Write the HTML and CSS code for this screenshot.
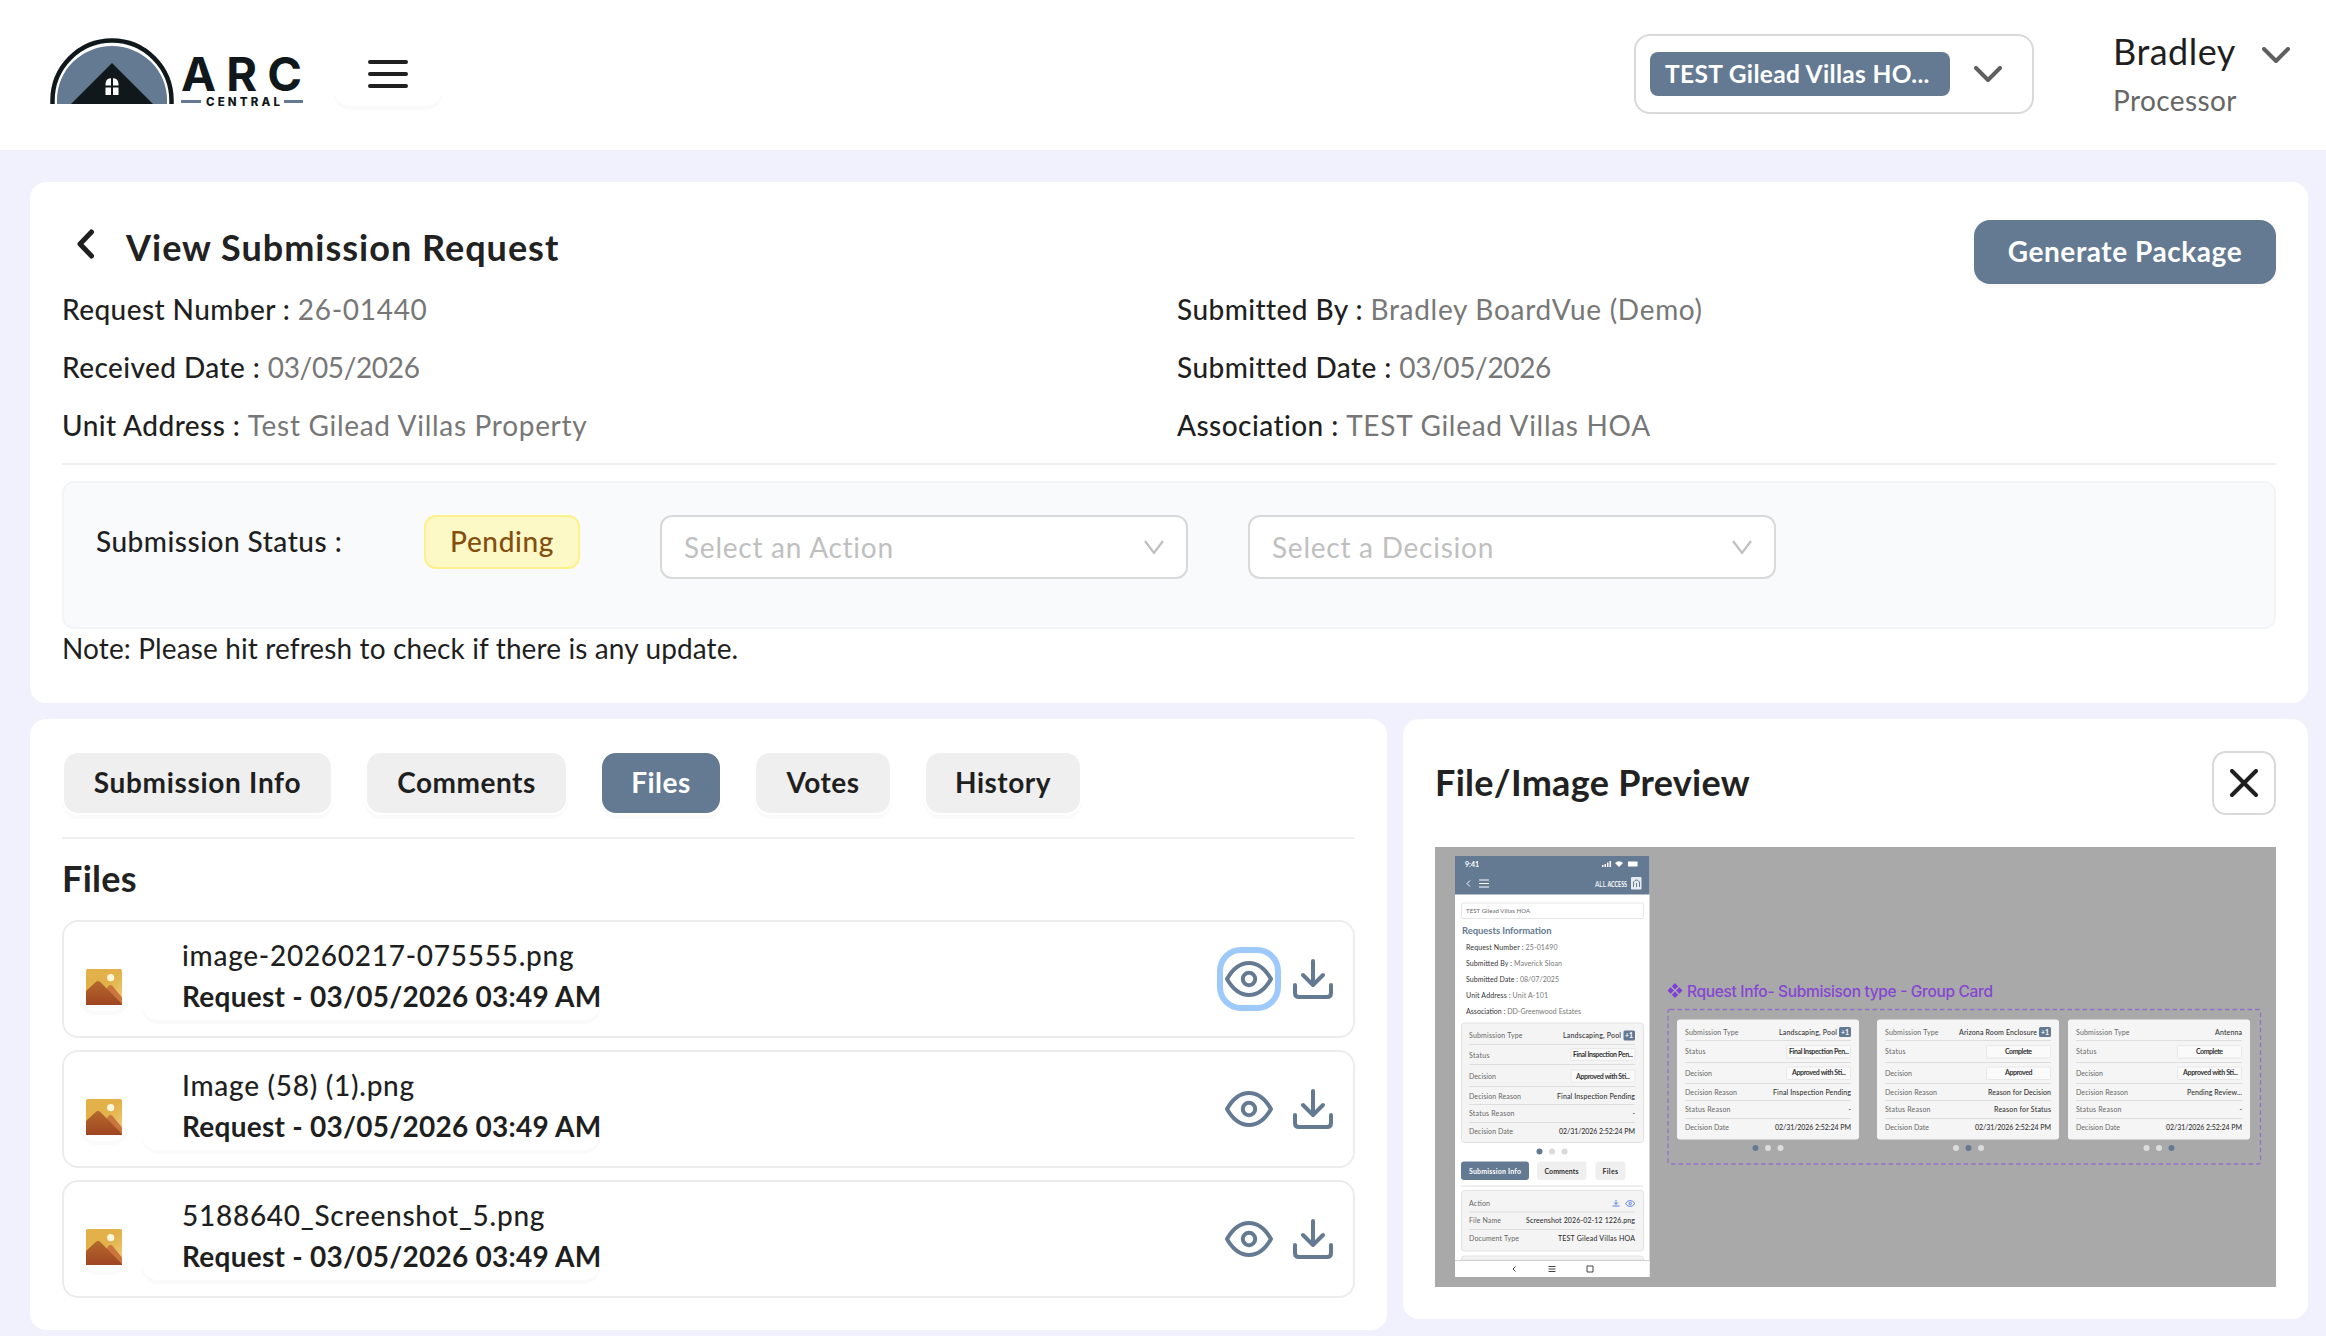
FILE: index.html
```html
<!DOCTYPE html>
<html lang="en">
<head>
  <meta charset="UTF-8" />
  <meta name="viewport" content="width=device-width, initial-scale=1" />
  <title>ARC Central - View Submission Request</title>
  <link rel="stylesheet" href="styles.css">
</head>

<body>
  <!-- Shared icons -->
  <svg class="sprite" width="0" height="0">
    <defs>
      <linearGradient id="sky" x1="0" y1="0" x2="1" y2="1">
        <stop offset="0.5" stop-color="#e2b149" />
        <stop offset="1" stop-color="#f0d080" />
      </linearGradient>
      <linearGradient id="hill" x1="0" y1="0" x2="0" y2="1">
        <stop offset="0" stop-color="#b56a2c" />
        <stop offset="1" stop-color="#a04523" />
      </linearGradient>
      <symbol id="icon-image" viewBox="0 0 36 36">
        <rect width="36" height="36" rx="1.5" fill="url(#sky)" />
        <circle cx="24.7" cy="8.7" r="3.6" fill="#fff6dc" />
        <path d="M15 26l7.500-9q2-2 4 0L36 28.500V36H15z" fill="#c9753c" />
        <path d="M0 22l9.500-8.800q2.500-2.400 5 0L36 35v1H0z" fill="url(#hill)" />
      </symbol>
      <symbol id="icon-eye" viewBox="0 0 48 48">
        <path d="M2 24C8 13.500 15.500 8 24 8s16 5.500 22 16c-6 10.500-13.500 16-22 16S8 34.500 2 24z" />
        <circle cx="24" cy="24" r="6.200" />
      </symbol>
      <symbol id="icon-download" viewBox="0 0 48 48">
        <path d="M24 6v24M14 20l10 10 10-10M6 30v8q0 4 4 4h28q4 0 4-4v-8" />
      </symbol>
      <symbol id="icon-chevron" viewBox="0 0 28 16">
        <path d="M2 2l12 12L26 2" />
      </symbol>
    </defs>
  </svg>

  <header class="topbar">
    <svg class="logo" width="256" height="72" viewBox="0 0 256 72">
      <path d="M2.500 68V64.500a59.500 60 0 0 1 119 0V68" fill="none" stroke="#10181c" stroke-width="4.500" />
      <path d="M7 68V64a55 54 0 0 1 110 0v4z" fill="#647a92" />
      <path d="M62 27l41 41H21z" fill="#10181c" />
      <path d="M55.500 59V48q0-6 6.500-6t6.500 6v11z" fill="#fff" />
      <path d="M62 42v17M55 50.500h14" stroke="#10181c" stroke-width="2" />
      <text class="logo-name" x="131" y="54.500" textLength="121">ARC</text>
      <path d="M131 65.500h20M234 65.500h19" stroke="#647a92" stroke-width="2.800" />
      <text class="logo-sub" x="156" y="69.500" textLength="74">CENTRAL</text>
    </svg>
    <button class="menu-btn">
      <svg width="40" height="28" viewBox="0 0 40 28"><path d="M2 2h36M2 14h36M2 26h36" /></svg>
    </button>
    <div class="assoc-select">
      <span class="assoc-tag">TEST Gilead Villas HO...</span>
      <svg class="chevron" width="28" height="16"><use href="#icon-chevron" /></svg>
    </div>
    <div class="user">
      <div class="user-name">Bradley</div>
      <div class="user-role">Processor</div>
    </div>
    <svg class="chevron user-chevron" width="28" height="16"><use href="#icon-chevron" /></svg>
  </header>

  <main class="page">
    <section class="card summary">
      <div class="summary-head">
        <svg class="back" width="20" height="30" viewBox="0 0 20 30"><path d="M15.500 3L4 15l11.500 12" /></svg>
        <h1>View Submission Request</h1>
        <button class="primary-btn">Generate Package</button>
      </div>
      <div class="details">
        <div>Request Number : <span>26-01440</span></div>
        <div>Submitted By : <span>Bradley BoardVue (Demo)</span></div>
        <div>Received Date : <span class="date">03/05/2026</span></div>
        <div>Submitted Date : <span class="date">03/05/2026</span></div>
        <div>Unit Address : <span>Test Gilead Villas Property</span></div>
        <div>Association : <span>TEST Gilead Villas HOA</span></div>
      </div>
      <div class="status-box">
        <div class="status-label">Submission Status :</div>
        <div class="badge-pending">Pending</div>
        <div class="select">
          <span>Select an Action</span>
          <svg width="22" height="16" viewBox="0 0 22 16"><path d="M2 2l9 12 9-12" /></svg>
        </div>
        <div class="select">
          <span>Select a Decision</span>
          <svg width="22" height="16" viewBox="0 0 22 16"><path d="M2 2l9 12 9-12" /></svg>
        </div>
      </div>
      <p class="note">Note: Please hit refresh to check if there is any update.</p>
    </section>

    <div class="columns">
      <section class="card files">
        <nav class="tabs">
          <button class="tab tab-info">Submission Info</button>
          <button class="tab tab-comments">Comments</button>
          <button class="tab tab-files active">Files</button>
          <button class="tab tab-votes">Votes</button>
          <button class="tab tab-history">History</button>
        </nav>
        <h2>Files</h2>
        <div class="file-list">
          <div class="file-row">
            <div class="thumb"><svg width="36" height="36"><use href="#icon-image" /></svg></div>
            <div class="file-info">
              <div class="file-name">image-20260217-075555.png</div>
              <div class="file-date">Request - 03/05/2026 03:49 AM</div>
            </div>
            <div class="actions">
              <button class="icon-btn focused"><svg width="48" height="48"><use href="#icon-eye" /></svg></button>
              <button class="icon-btn"><svg width="48" height="48"><use href="#icon-download" /></svg></button>
            </div>
          </div>
          <div class="file-row">
            <div class="thumb"><svg width="36" height="36"><use href="#icon-image" /></svg></div>
            <div class="file-info">
              <div class="file-name">Image (58) (1).png</div>
              <div class="file-date">Request - 03/05/2026 03:49 AM</div>
            </div>
            <div class="actions">
              <button class="icon-btn"><svg width="48" height="48"><use href="#icon-eye" /></svg></button>
              <button class="icon-btn"><svg width="48" height="48"><use href="#icon-download" /></svg></button>
            </div>
          </div>
          <div class="file-row">
            <div class="thumb"><svg width="36" height="36"><use href="#icon-image" /></svg></div>
            <div class="file-info">
              <div class="file-name">5188640_Screenshot_5.png</div>
              <div class="file-date">Request - 03/05/2026 03:49 AM</div>
            </div>
            <div class="actions">
              <button class="icon-btn"><svg width="48" height="48"><use href="#icon-eye" /></svg></button>
              <button class="icon-btn"><svg width="48" height="48"><use href="#icon-download" /></svg></button>
            </div>
          </div>
        </div>
      </section>

      <section class="card preview">
        <div class="preview-head">
          <h2>File/Image Preview</h2>
          <button class="close-btn">
            <svg width="28" height="28" viewBox="0 0 28 28"><path d="M2 2l24 24M26 2L2 26" /></svg>
          </button>
        </div>
        <svg class="preview-img" width="841" height="440" viewBox="0 0 841 440">
          <rect width="841" height="440" fill="#a9a9a9" />

          <!-- Phone mockup -->
          <rect x="20" y="9" width="194.500" height="421" fill="#fff" />
          <rect x="20" y="9" width="194.500" height="38.500" fill="#647a92" />
          <g fill="#fff">
            <text x="30" y="20" class="strong" textLength="14">9:41</text>
            <path d="M167 18h1.500v2H167zM169.500 17h1.500v3h-1.500zM172 15.500h1.500V20H172zM174.500 14h1.500v6h-1.500zM193 14.500h9.500v5H193z" />
            <path d="M180 16q4-3.500 8 0l-4 4z" />
            <text x="160" y="40" textLength="11" lengthAdjust="spacingAndGlyphs">ALL</text>
            <text x="172.500" y="40" class="strong" textLength="19.500" lengthAdjust="spacingAndGlyphs">ACCESS</text>
            <rect x="196" y="30" width="10.500" height="12.500" rx="1" opacity="0.85" />
          </g>
          <path d="M198.500 40v-5q3-4 6 0v5M201.500 36v4" fill="none" stroke="#647a92" />
          <path d="M35 33.500l-3 3 3 3M44 33h10M44 36.500h10M44 40h10" fill="none" stroke="#fff" />
          <rect x="26.500" y="56" width="182" height="15.500" rx="1.500" fill="#fff" stroke="#e6e6e6" />
          <text x="31" y="65.500" class="small" textLength="64">TEST Gilead Villas HOA</text>
          <text x="27" y="86.500" class="heading" textLength="89.500">Requests Information</text>
          <g class="fields">
            <text x="31" y="102.500" textLength="91.500"><tspan>Request Number :</tspan> 25-01490</text>
            <text x="31" y="118.500" textLength="96"><tspan>Submitted By :</tspan> Maverick Sloan</text>
            <text x="31" y="134.500" textLength="93"><tspan>Submitted Date :</tspan> 08/07/2025</text>
            <text x="31" y="150.500" textLength="82"><tspan>Unit Address :</tspan> Unit A-101</text>
            <text x="31" y="166.500" textLength="115"><tspan>Association :</tspan> DD-Greenwood Estates</text>
          </g>

          <rect x="26.500" y="176" width="182" height="119.500" rx="3" fill="#f4f4f4" stroke="#e2e2e2" />
          <path d="M34 197.500h166M34 217.500h166M34 239.500h166M34 257.500h166M34 275.500h166" class="rule" />
          <g class="label">
            <text x="34" y="191" textLength="53.500">Submission Type</text>
            <text x="34" y="210.500" textLength="20.500">Status</text>
            <text x="34" y="232" textLength="27">Decision</text>
            <text x="34" y="251.500" textLength="52">Decision Reason</text>
            <text x="34" y="269" textLength="45.500">Status Reason</text>
            <text x="34" y="286.500" textLength="44">Decision Date</text>
          </g>
          <rect x="136" y="201.500" width="64" height="12" rx="1" class="value-box" />
          <rect x="136" y="223" width="64" height="12" rx="1" class="value-box" />
          <rect x="188.500" y="183.500" width="11.500" height="10" rx="1.500" fill="#647a92" />
          <text x="190" y="191" class="strong" fill="#fff">+1</text>
          <g class="value">
            <text x="186" y="191" textLength="58">Landscaping, Pool</text>
            <text x="198" y="210" class="strong" textLength="60">Final Inspection Pen...</text>
            <text x="195" y="231.500" class="strong" textLength="54">Approved with Sti...</text>
            <text x="200" y="251.500" textLength="78">Final Inspection Pending</text>
            <text x="200" y="269">-</text>
            <text x="200" y="286.500" textLength="76">02/31/2026 2:52:24 PM</text>
          </g>
          <circle cx="104.500" cy="304.500" r="3" fill="#647a92" />
          <circle cx="117" cy="304.500" r="3" fill="#d9d9d9" />
          <circle cx="129.500" cy="304.500" r="3" fill="#d9d9d9" />

          <rect x="26" y="314.500" width="68" height="18.500" rx="3" fill="#647a92" />
          <rect x="102" y="314.500" width="49.500" height="18.500" rx="3" fill="#efefef" />
          <rect x="160.500" y="314.500" width="30" height="18.500" rx="3" fill="#efefef" />
          <text x="34" y="326.500" class="strong" fill="#fff" textLength="52">Submission Info</text>
          <text x="109.500" y="326.500" class="strong" textLength="34">Comments</text>
          <text x="167.500" y="326.500" class="strong" textLength="15.500">Files</text>
          <path d="M26 339h182" class="rule" />
          <rect x="26.500" y="343.500" width="182" height="60.500" rx="3" fill="#f4f4f4" stroke="#e2e2e2" />
          <path d="M34 365h166M34 382.500h166" class="rule" />
          <text x="34" y="358.500" class="label" textLength="21">Action</text>
          <text x="34" y="376" class="label" textLength="32">File Name</text>
          <text x="34" y="393.500" class="label" textLength="50">Document Type</text>
          <g class="value">
            <text x="200" y="376" textLength="109">Screenshot 2026-02-12 1226.png</text>
            <text x="200" y="393.500" textLength="77">TEST Gilead Villas HOA</text>
          </g>
          <g fill="none" stroke="#5b7fe8">
            <path d="M181 353v4M179 355.500l2 2 2-2M177.500 359h7" />
            <path d="M190.500 356.500q4.500-6 9.500 0q-5 6-9.500 0z" />
            <circle cx="195.200" cy="356.500" r="1.200" />
          </g>
          <path d="M26.500 413v-1q0-3 3-3h176q3 0 3 3v1z" fill="#f4f4f4" stroke="#e2e2e2" />
          <rect x="20" y="413.500" width="194.500" height="16.500" fill="#fff" />
          <path d="M20 413.500h194.500" stroke="#d0d0d0" />
          <path d="M80.500 419.500l-2.500 2.500 2.500 2.500M113.500 419.500h7M113.500 422h7M113.500 424.500h7M152 419h6v6h-6z" fill="none" stroke="#444" />

          <!-- Group card frame -->
          <path d="M240 136l3.200 3.200-3.200 3.200-3.200-3.200zM240 144.600l3.200 3.200-3.200 3.200-3.200-3.200zM235.700 140.300l3.200 3.200-3.200 3.200-3.200-3.200zM244.300 140.300l3.200 3.200-3.200 3.200-3.200-3.200z" fill="#7f3fd6" />
          <text x="252" y="149.500" class="frame-title" textLength="306">Rquest Info- Submisison type - Group Card</text>
          <rect x="233" y="162.500" width="592.500" height="154.500" rx="2" fill="none" stroke="#9670c8" stroke-width="1.300" stroke-dasharray="4.500 3" />

          <g id="group-card">
            <rect x="242" y="172.500" width="182" height="120" rx="3" fill="#f5f5f5" />
            <path d="M250 193.500h166M250 215.500h166M250 236.500h166M250 253.500h166M250 271.500h166" class="rule" />
            <rect x="351.500" y="198.500" width="64" height="12.500" rx="1" class="value-box" />
            <rect x="351.500" y="220" width="64" height="12.500" rx="1" class="value-box" />
            <g class="label">
              <text x="250" y="187.500" textLength="53.500">Submission Type</text>
              <text x="250" y="207" textLength="20.500">Status</text>
              <text x="250" y="228.500" textLength="27">Decision</text>
              <text x="250" y="247.500" textLength="52">Decision Reason</text>
              <text x="250" y="265" textLength="45.500">Status Reason</text>
              <text x="250" y="282.500" textLength="44">Decision Date</text>
            </g>
            <text x="416" y="282.500" class="value" textLength="76">02/31/2026 2:52:24 PM</text>
          </g>
          <use href="#group-card" x="200" />
          <use href="#group-card" x="391" />

          <rect x="404" y="180" width="12" height="10" rx="1.500" fill="#647a92" />
          <text x="406" y="187.500" class="strong" fill="#fff">+1</text>
          <rect x="604" y="180" width="12" height="10" rx="1.500" fill="#647a92" />
          <text x="606" y="187.500" class="strong" fill="#fff">+1</text>
          <g class="value">
            <text x="402" y="187.500" textLength="58">Landscaping, Pool</text>
            <text x="414" y="206.500" class="strong" textLength="60">Final Inspection Pen...</text>
            <text x="411" y="228" class="strong" textLength="54">Approved with Sti...</text>
            <text x="416" y="247.500" textLength="78">Final Inspection Pending</text>
            <text x="416" y="265">-</text>
            <text x="602" y="187.500" textLength="78">Arizona Room Enclosure</text>
            <text x="597" y="206.500" class="strong" textLength="27">Complete</text>
            <text x="597.500" y="228" class="strong" textLength="27.500">Approved</text>
            <text x="616" y="247.500" textLength="63">Reason for Decision</text>
            <text x="616" y="265" textLength="57">Reason for Status</text>
            <text x="807" y="187.500" textLength="27">Antenna</text>
            <text x="788" y="206.500" class="strong" textLength="27">Complete</text>
            <text x="803" y="228" class="strong" textLength="55">Approved with Sti...</text>
            <text x="807" y="247.500" textLength="55">Pending Review...</text>
            <text x="807" y="265">-</text>
          </g>
          <g fill="#dcdcdc">
            <circle cx="320.500" cy="301" r="3" fill="#647a92" />
            <circle cx="333" cy="301" r="3" />
            <circle cx="345.500" cy="301" r="3" />
            <circle cx="521" cy="301" r="3" />
            <circle cx="533.500" cy="301" r="3" fill="#647a92" />
            <circle cx="546" cy="301" r="3" />
            <circle cx="711.500" cy="301" r="3" />
            <circle cx="724" cy="301" r="3" />
            <circle cx="736.500" cy="301" r="3" fill="#647a92" />
          </g>
        </svg>
      </section>
    </div>
  </main>
</body>
</html>
```
FILE: styles.css
```css
* {
  box-sizing: border-box;
}

body {
  margin: 0;
  height: 1336px;
  overflow: hidden;
  background: #f1f1fe;
  color: #1f1f1f;
  font-family: Lato, 'Open Sans', sans-serif;
  font-size: 28px;
}

h1, h2, p {
  margin: 0;
}

h1, h2 {
  font-size: 36px;
  font-weight: 700;
  color: #222;
  letter-spacing: 0.3px;
  white-space: nowrap;
}

button {
  border: 0;
  background: none;
  padding: 0;
  font-family: inherit;
  font-size: inherit;
  color: inherit;
  cursor: pointer;
}

svg {
  display: block;
  flex: none;
}

.sprite {
  position: absolute;
}

/* Header */
.topbar {
  display: flex;
  align-items: flex-start;
  height: 150px;
  padding-left: 50px;
  background: #fff;
}

.logo {
  margin-top: 36px;
  font-family: Inter, sans-serif;
}

.logo-name {
  font-size: 47px;
  font-weight: 700;
  fill: #10181c;
}

.logo-sub {
  font-size: 11.500px;
  font-weight: 800;
  fill: #10181c;
}

.menu-btn {
  display: flex;
  justify-content: center;
  align-items: center;
  width: 108px;
  height: 64px;
  margin: 42px 0 0 28px;
  border-radius: 16px;
  box-shadow: 0 4px 0 rgba(0, 0, 0, 0.02);
}

.menu-btn path {
  stroke: #1f1f1f;
  stroke-width: 4;
  stroke-linecap: round;
}

.assoc-select {
  display: flex;
  align-items: center;
  gap: 24px;
  width: 400px;
  height: 80px;
  margin: 34px 0 0 auto;
  padding-left: 14px;
  border: 2px solid #d9d9d9;
  border-radius: 16px;
}

.assoc-tag {
  width: 300px;
  height: 44px;
  padding-left: 15px;
  border-radius: 8px;
  background: #647a92;
  color: #fff;
  font-size: 24.500px;
  font-weight: 700;
  letter-spacing: 0.33px;
  line-height: 44px;
  white-space: nowrap;
}

.chevron {
  fill: none;
  stroke: #5f5f5f;
  stroke-width: 4;
  stroke-linecap: round;
  stroke-linejoin: round;
}

.user {
  width: 149px;
  margin: 27px 0 0 79px;
}

.user-name {
  font-size: 36px;
  letter-spacing: 0.5px;
  line-height: 48px;
}

.user-role {
  letter-spacing: 0.4px;
  line-height: 50px;
  color: #666;
}

.user-chevron {
  margin: 47px 36px 0 0;
}

/* Cards */
.page {
  padding: 32px 18px 0 30px;
}

.card {
  padding: 32px;
  border-radius: 16px;
  background: #fff;
}

.summary {
  height: 521px;
}

.summary-head {
  display: flex;
  align-items: flex-start;
  height: 66px;
}

.summary-head h1 {
  margin-left: 30px;
  letter-spacing: 1px;
  line-height: 66px;
}

.back {
  margin: 15px 0 0 14px;
}

.back path {
  fill: none;
  stroke: #1f1f1f;
  stroke-width: 5;
  stroke-linecap: round;
  stroke-linejoin: round;
}

.primary-btn {
  width: 302px;
  height: 64px;
  margin: 6px 0 0 auto;
  padding-bottom: 2px;
  border-radius: 16px;
  background: #647a92;
  box-shadow: 0 4px 0 rgba(0, 0, 0, 0.02);
  color: #fff;
  font-weight: 700;
  letter-spacing: 0.56px;
}

.details {
  display: grid;
  grid-template-columns: 1fr 1fr;
  column-gap: 16px;
  padding-bottom: 9px;
  border-bottom: 2px solid #efefef;
  font-weight: 500;
  letter-spacing: 0.43px;
  line-height: 58px;
}

.details span {
  color: #777;
  font-weight: 400;
  letter-spacing: 0.7px;
}

.details .date {
  letter-spacing: -0.35px;
}

.status-box {
  display: flex;
  align-items: flex-start;
  height: 148px;
  margin-top: 16px;
  padding: 32px;
  border: 2px solid #f3f4f6;
  border-radius: 12px;
  background: #f9fafb;
}

.status-label {
  width: 328px;
  font-weight: 500;
  letter-spacing: 0.5px;
  line-height: 52px;
}

.badge-pending {
  width: 156px;
  height: 54px;
  margin-right: 80px;
  border: 2px solid #fef08a;
  border-radius: 12px;
  background: #fdf9c6;
  color: #854d0e;
  font-weight: 500;
  letter-spacing: 0.6px;
  line-height: 48px;
  text-align: center;
}

.select {
  display: flex;
  align-items: center;
  justify-content: space-between;
  width: 528px;
  height: 64px;
  margin-right: 60px;
  padding: 0 21px 0 22px;
  border: 2px solid #d9d9d9;
  border-radius: 12px;
  background: #fff;
  color: #bfbfbf;
  letter-spacing: 0.75px;
}

.select span {
  padding-bottom: 1px;
}

.select path {
  fill: none;
  stroke: #bfbfbf;
  stroke-width: 2.200;
}

.note {
  letter-spacing: 0.12px;
  line-height: 39px;
}

.columns {
  display: grid;
  grid-template-columns: 1357fr 905fr;
  align-items: start;
  gap: 16px;
  margin-top: 16px;
}

/* Files */
.files {
  height: 611px;
}

.tabs {
  display: flex;
  gap: 32px;
  padding-bottom: 22px;
  border-bottom: 2px solid #efefef;
}

.tab {
  height: 64px;
  padding-bottom: 2px;
  border: 2px solid #fff;
  border-radius: 16px;
  background: #efefef;
  box-shadow: 0 4px 0 rgba(0, 0, 0, 0.02);
  font-weight: 700;
  letter-spacing: 0.5px;
}

.tab.active {
  background: #647a92;
  color: #fff;
}

.tab-info {
  width: 271px;
  letter-spacing: 0.69px;
}

.tab-comments {
  width: 203px;
}

.tab-files {
  width: 122px;
}

.tab-votes {
  width: 138px;
}

.tab-history {
  width: 158px;
}

.files h2 {
  height: 81px;
  line-height: 78px;
}

.file-list {
  display: flex;
  flex-direction: column;
  gap: 12px;
}

.file-row {
  display: flex;
  align-items: flex-start;
  height: 118px;
  padding: 0 14px 0 16px;
  border: 2px solid #ececec;
  border-radius: 16px;
}

.thumb {
  width: 48px;
  height: 48px;
  margin-top: 41px;
  padding: 6px;
  border-radius: 16px;
  box-shadow: 0 4px 0 rgba(0, 0, 0, 0.02);
}

.file-info {
  width: 458px;
  height: 85px;
  margin: 13px 0 0 14px;
  padding-left: 40px;
  border-radius: 16px;
  box-shadow: 0 4px 0 rgba(0, 0, 0, 0.02);
  line-height: 41px;
  white-space: nowrap;
}

.file-name {
  font-weight: 500;
  letter-spacing: 0.73px;
}

.file-date {
  font-weight: 700;
  letter-spacing: 0.25px;
}

.actions {
  display: flex;
  gap: 12px;
  margin: 31px 0 0 auto;
}

.icon-btn {
  width: 52px;
  height: 52px;
  padding: 2px;
  border-radius: 18px;
  fill: none;
  stroke: #647a92;
  stroke-width: 4;
  stroke-linecap: round;
  stroke-linejoin: round;
}

.icon-btn.focused {
  box-shadow: 0 0 0 6px #9dc9fb;
}

/* Preview */
.preview {
  height: 600px;
}

.preview-head {
  display: flex;
  align-items: flex-start;
  justify-content: space-between;
  margin-bottom: 32px;
}

.preview-head h2 {
  line-height: 62px;
}

.close-btn {
  display: flex;
  align-items: center;
  justify-content: center;
  width: 64px;
  height: 64px;
  border: 2px solid #d9d9d9;
  border-radius: 14px;
}

.close-btn path {
  stroke: #1f1f1f;
  stroke-width: 4;
  stroke-linecap: round;
}

.preview-img {
  font-size: 7px;
  fill: #333;
}

.preview-img .strong {
  font-weight: 700;
}

.preview-img .small {
  font-size: 6px;
  fill: #666;
}

.preview-img .heading {
  font-size: 9.500px;
  font-weight: 700;
  fill: #647a92;
}

.preview-img .fields {
  fill: #777;
}

.preview-img tspan {
  fill: #333;
}

.preview-img .label {
  fill: #666;
}

.preview-img .value {
  fill: #333;
  font-weight: 500;
  text-anchor: end;
}

.preview-img .value-box {
  fill: #fafafa;
  stroke: #e8e8e8;
}

.preview-img .rule {
  stroke: #dedede;
}

.preview-img .frame-title {
  font-family: Inter, sans-serif;
  font-size: 15.500px;
  font-weight: 500;
  fill: #8645d3;
}
```
